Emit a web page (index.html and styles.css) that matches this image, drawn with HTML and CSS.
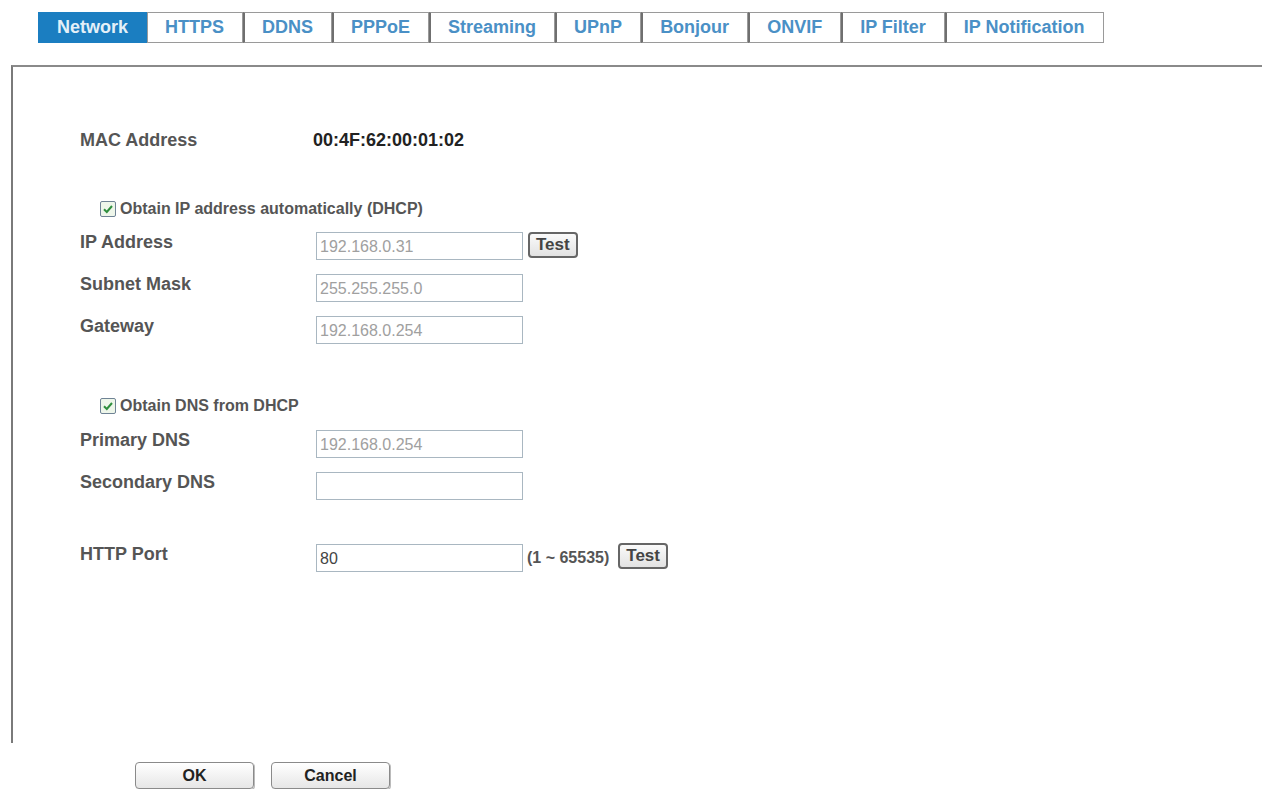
FILE: index.html
```html
<!DOCTYPE html>
<html lang="en">
  <head>
    <meta charset="UTF-8" />
    <meta name="viewport" content="width=device-width, initial-scale=1.0" />
    <title>Network</title>
    <link rel="stylesheet" href="styles.css">
  </head>

  <body>
    <ul class="tabs">
      <li class="tab active">Network</li>
      <li class="tab">HTTPS</li>
      <li class="tab">DDNS</li>
      <li class="tab">PPPoE</li>
      <li class="tab">Streaming</li>
      <li class="tab">UPnP</li>
      <li class="tab">Bonjour</li>
      <li class="tab">ONVIF</li>
      <li class="tab">IP Filter</li>
      <li class="tab">IP Notification</li>
    </ul>

    <div class="panel">
      <div class="row mac-row">
        <span class="label">MAC Address</span>
        <span class="mac">00:4F:62:00:01:02</span>
      </div>

      <div class="check check-ip">
        <span class="box">
          <svg width="12" height="12" viewBox="0 0 12 12">
            <path d="M2 6.2 L4.8 9 L10 3" fill="none" stroke="#2f8f3e" stroke-width="2" />
          </svg>
        </span>
        Obtain IP address automatically (DHCP)
      </div>

      <div class="row field">
        <span class="label">IP Address</span>
        <input class="text dim" type="text" value="192.168.0.31">
        <button class="test">Test</button>
      </div>
      <div class="row field">
        <span class="label">Subnet Mask</span>
        <input class="text dim" type="text" value="255.255.255.0">
      </div>
      <div class="row field">
        <span class="label">Gateway</span>
        <input class="text dim" type="text" value="192.168.0.254">
      </div>

      <div class="check check-dns">
        <span class="box">
          <svg width="12" height="12" viewBox="0 0 12 12">
            <path d="M2 6.2 L4.8 9 L10 3" fill="none" stroke="#2f8f3e" stroke-width="2" />
          </svg>
        </span>
        Obtain DNS from DHCP
      </div>

      <div class="row field">
        <span class="label">Primary DNS</span>
        <input class="text dim" type="text" value="192.168.0.254">
      </div>
      <div class="row field">
        <span class="label">Secondary DNS</span>
        <input class="text" type="text" value="">
      </div>

      <div class="row field port-row">
        <span class="label">HTTP Port</span>
        <input class="text" type="text" value="80">
        <span class="range">(1 ~ 65535)</span>
        <button class="test">Test</button>
      </div>
    </div>

    <div class="actions">
      <button class="btn">OK</button>
      <button class="btn">Cancel</button>
    </div>
  </body>
</html>
```

FILE: styles.css
```css
body {
  margin: 0;
  background-color: #ffffff;
  font-family: "Liberation Sans", Arial, Helvetica, sans-serif;
  color: #555;
}

.tabs {
  display: flex;
  margin: 12px 0 0 38px;
  padding: 0;
  list-style: none;
}

.tab {
  box-sizing: border-box;
  height: 31px;
  padding: 0 18px 0 17px;
  line-height: 29px;
  font-size: 18px;
  font-weight: bold;
  color: #4a90c6;
  border: 1px solid #9a9a9a;
  border-left: 2px solid #6f6f6f;
  background-color: #fff;
}

.tab.active {
  background-color: #1b7ec1;
  border-color: #1b7ec1;
  color: #e4f0f8;
}

.tab.active + .tab {
  border-left-color: #9a9a9a;
  border-left-width: 1px;
}

.panel {
  box-sizing: border-box;
  height: 678px;
  margin: 22px 0 0 11px;
  padding: 62px 0 0 67px;
  border-top: 2px solid #8a8a8a;
  border-left: 2px solid #7a7a7a;
}

.row {
  display: flex;
  align-items: flex-start;
}

.label {
  width: 236px;
  flex-shrink: 0;
  font-size: 18px;
  font-weight: bold;
  line-height: 22px;
  color: #555;
}

.mac-row {
  height: 22px;
}

.mac {
  margin-left: -3px;
  font-size: 18px;
  font-weight: bold;
  line-height: 22px;
  color: #222;
}

.check {
  display: flex;
  align-items: center;
  height: 22px;
  margin-left: 20px;
  font-size: 16px;
  font-weight: bold;
  color: #555;
}

.check-ip {
  margin-top: 47px;
  margin-bottom: 12px;
}

.check-dns {
  margin-top: 51px;
  margin-bottom: 13px;
}

.box {
  box-sizing: border-box;
  display: flex;
  align-items: center;
  justify-content: center;
  width: 16px;
  height: 16px;
  margin-right: 4px;
  border: 1px solid #6f8395;
  border-radius: 2px;
  background-color: #eef6ea;
}

.field {
  height: 28px;
  margin-bottom: 14px;
}

.field .label {
  line-height: 20px;
}

.text {
  box-sizing: border-box;
  width: 207px;
  height: 28px;
  margin: 0;
  padding: 2px 3px 0;
  border: 1px solid #a9b7c1;
  font-family: "Liberation Sans", Arial, Helvetica, sans-serif;
  font-size: 16px;
  color: #444;
  outline: none;
}

.text.dim {
  color: #a0a0a0;
}

.test {
  box-sizing: border-box;
  height: 26px;
  margin: 0 0 0 5px;
  padding: 0 6px;
  border: 2px solid #666;
  border-radius: 4px;
  background: linear-gradient(#fafafa, #e2e2e2);
  font-family: "Liberation Sans", Arial, Helvetica, sans-serif;
  font-size: 17px;
  font-weight: bold;
  color: #444;
}

.port-row {
  margin-top: 44px;
}

.port-row .test {
  margin-left: 9px;
  margin-top: -1px;
}

.range {
  margin-left: 4px;
  font-size: 16px;
  font-weight: bold;
  line-height: 28px;
  color: #555;
}

.actions {
  display: flex;
  gap: 17px;
  margin: 19px 0 0 135px;
}

.btn {
  box-sizing: border-box;
  width: 119px;
  height: 27px;
  border: 1px solid #8a8a8a;
  border-radius: 4px;
  background: linear-gradient(#ffffff, #e6e6e6);
  box-shadow: 1px 1px 0 #bbb;
  font-family: "Liberation Sans", Arial, Helvetica, sans-serif;
  font-size: 16px;
  font-weight: bold;
  color: #222;
}
```
